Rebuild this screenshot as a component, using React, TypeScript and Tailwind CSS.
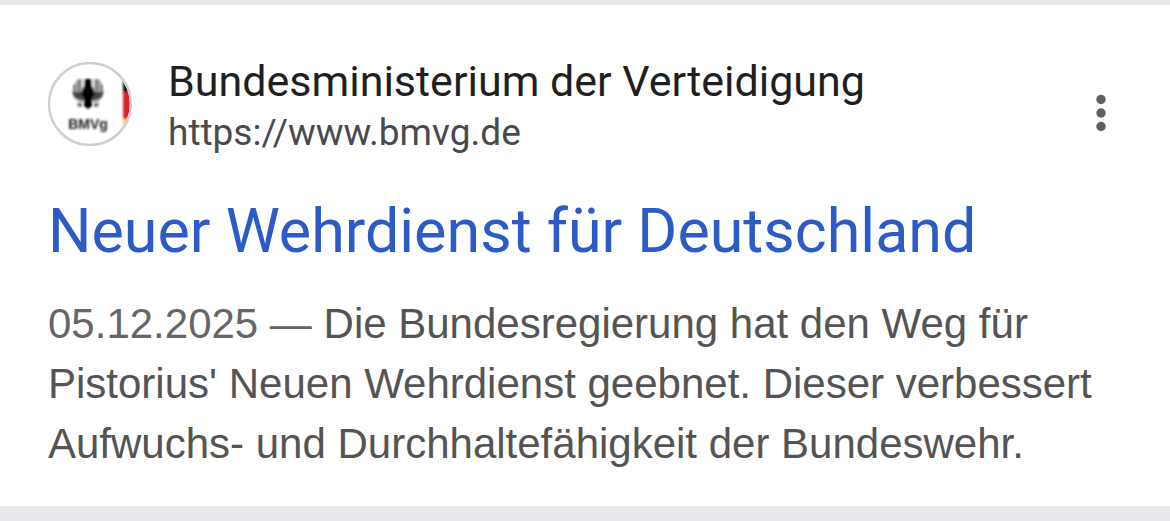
import React from "react";

function SiteLogo() {
  return (
    <svg viewBox="0 0 84 84" className="h-21 w-21 shrink-0" role="img" aria-label="BMVg">
      <defs>
        <clipPath id="disc">
          <circle cx="42" cy="42" r="40" />
        </clipPath>
        <filter id="soft" x="-20%" y="-20%" width="140%" height="140%">
          <feGaussianBlur stdDeviation="1" />
        </filter>
      </defs>
      <circle cx="42" cy="42" r="41" fill="#fff" />
      <g clipPath="url(#disc)">
        <g filter="url(#soft)">
          <rect x="75" y="16" width="12" height="15" fill="#111" />
          <rect x="75" y="30" width="12" height="27" fill="#d8232f" />
          <rect x="75" y="57" width="12" height="12" fill="#f7d154" />
        </g>
      </g>
      {/* eagle */}
      <g filter="url(#soft)">
        <path d="M30 17h21l4 7v10l-5 6H31l-6-6V24z" fill="#a3a3a3" />
        <path d="M31 18v13M49 18v13M26 23v10M54 23v10" stroke="#777" strokeWidth="2" />
        <path d="M24 30h32l-3 6-6 2H33l-6-2z" fill="#444" />
        <path d="M37 17h6l1 8 3 6-3 5v8l-4 3-4-3v-8l-3-5 3-6z" fill="#000" />
        <path d="M35 17v8M45 17v8" stroke="#eee" strokeWidth="2" />
        <path d="M29 41h5v4h-4zM46 41h5l-1 4h-4z" fill="#777" />
        <text
          x="40"
          y="67"
          textAnchor="middle"
          fontSize="14"
          fontWeight="700"
          fill="#222"
          className="font-['Liberation_Sans',sans-serif]"
        >
          BMVg
        </text>
      </g>
      <circle cx="42" cy="42" r="41" fill="none" stroke="#d0d0d0" strokeWidth="2.5" />
    </svg>
  );
}

export default function App() {
  return (
    <main className="bg-[#e8e9ed] pt-[5px] pb-[15px] font-['Liberation_Sans',Arial,sans-serif]">
      <article className="bg-white px-12 pt-[47px] pb-8">
        <div className="flex items-center">
          <a href="https://www.bmvg.de" className="flex min-w-0 flex-1 items-center gap-9">
            <SiteLogo />
            <div className="min-w-0 font-['Roboto',sans-serif]">
              <p className="text-[43px] leading-[58px] text-[#1f1f1f]">
                Bundesministerium der Verteidigung
              </p>
              <p className="text-[37px] leading-[46px] text-[#474a4e]">https://www.bmvg.de</p>
            </div>
          </a>
          <button
            type="button"
            aria-label="Mehr"
            className="mt-[18px] flex h-12 w-[42px] items-center justify-center"
          >
            <svg viewBox="0 0 10 38" className="h-[38px] w-[10px]" fill="#5f6063">
              <circle cx="5" cy="5.5" r="4.7" />
              <circle cx="5" cy="19" r="4.7" />
              <circle cx="5" cy="32.5" r="4.7" />
            </svg>
          </button>
        </div>
        <h3 className="mt-[35px] font-['Roboto',sans-serif] text-[61px] leading-[80px] text-[#2c5bc7]">
          <a href="https://www.bmvg.de">Neuer Wehrdienst für Deutschland</a>
        </h3>
        <p className="mt-[23px] text-[42px] leading-[60px] text-[#545454]">
          <span className="text-[#666]">05.12.2025 — </span>
          Die Bundesregierung hat den Weg für Pistorius' Neuen Wehrdienst geebnet. Dieser verbessert
          Aufwuchs- und Durchhaltefähigkeit der Bundeswehr.
        </p>
      </article>
    </main>
  );
}
